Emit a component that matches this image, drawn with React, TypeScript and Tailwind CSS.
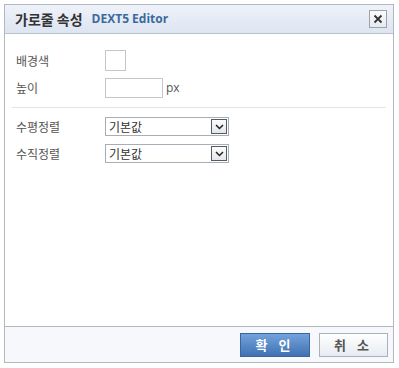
import React from "react";

const font = { fontFamily: '"Noto Sans CJK KR", "Noto Sans", sans-serif' };

const SelectBox: React.FC<{ value: string }> = ({ value }) => (
  <div className="flex h-[19px] w-[124px] items-center border border-[#a9aeb6] bg-white">
    <span className="flex-1 pl-[3px] text-[12px] leading-none text-[#333]">{value}</span>
    <div className="mr-[1px] flex h-[15px] w-[16px] items-center justify-center border border-[#555b63] bg-gradient-to-b from-[#fdfdfd] to-[#e4e6ea]">
      <svg width="9" height="6" viewBox="0 0 9 6">
        <path d="M1 1 L4.5 4.5 L8 1" fill="none" stroke="#222" strokeWidth="1.5" />
      </svg>
    </div>
  </div>
);

export default function App() {
  return (
    <div className="bg-white p-[4px]" style={font}>
      <div className="flex h-[359px] w-[390px] flex-col border border-[#b3b8c0] bg-white">
        {/* header */}
        <div className="flex h-[29px] items-center justify-between border-b border-[#b8c0cc] bg-gradient-to-b from-[#eef2fa] to-[#dde5f1] pl-[10px] pr-[6px]">
          <div className="flex items-center gap-[9px]">
            <span className="text-[14px] font-bold text-[#333]">가로줄 속성</span>
            <span className="text-[12px] font-bold text-[#3b6a9b]" style={{ fontFamily: '"Open Sans", "Noto Sans", sans-serif' }}>
              DEXT5 Editor
            </span>
          </div>
          <div className="flex h-[18px] w-[18px] items-center justify-center border border-[#9ea3aa] bg-gradient-to-b from-[#fafbfd] to-[#e6e9ef]">
            <svg width="10" height="10" viewBox="0 0 10 10">
              <path d="M1.5 1.5 L8.5 8.5 M8.5 1.5 L1.5 8.5" stroke="#333" strokeWidth="1.8" />
            </svg>
          </div>
        </div>

        {/* body */}
        <div className="flex-1 pt-[16px]">
          <div className="flex flex-col gap-[7px] pl-[11px]">
            <div className="flex items-center">
              <span className="w-[89px] text-[12px] text-[#555]">배경색</span>
              <div className="h-[21px] w-[21px] border border-[#c3c6cb] bg-white" />
            </div>
            <div className="flex items-center">
              <span className="w-[89px] text-[12px] text-[#555]">높이</span>
              <div className="h-[20px] w-[58px] border border-[#c3c6cb] bg-white" />
              <span className="ml-[3px] text-[12px] text-[#555]" style={{ fontFamily: '"Open Sans", sans-serif' }}>px</span>
            </div>
          </div>
          <div className="mx-[7px] mt-[9px] h-px bg-[#e2e4e8]" />
          <div className="flex flex-col gap-[8px] pl-[11px] pt-[9px]">
            <div className="flex items-center">
              <span className="w-[89px] text-[12px] text-[#555]">수평정렬</span>
              <SelectBox value="기본값" />
            </div>
            <div className="flex items-center">
              <span className="w-[89px] text-[12px] text-[#555]">수직정렬</span>
              <SelectBox value="기본값" />
            </div>
          </div>
        </div>

        {/* footer */}
        <div className="flex h-[36px] items-center justify-end gap-[9px] border-t border-[#b3b8c0] bg-[#f6f8fc] pr-[5px]">
          <button className="h-[24px] w-[70px] border border-[#3a66a0] bg-gradient-to-b from-[#74a3dc] to-[#3f71b3] text-[13px] font-bold tracking-[4px] text-white">
            확 인
          </button>
          <button className="h-[24px] w-[69px] border border-[#a9b0bb] bg-gradient-to-b from-[#ffffff] to-[#e7ebf1] text-[13px] font-bold tracking-[4px] text-[#555]">
            취 소
          </button>
        </div>
      </div>
    </div>
  );
}
